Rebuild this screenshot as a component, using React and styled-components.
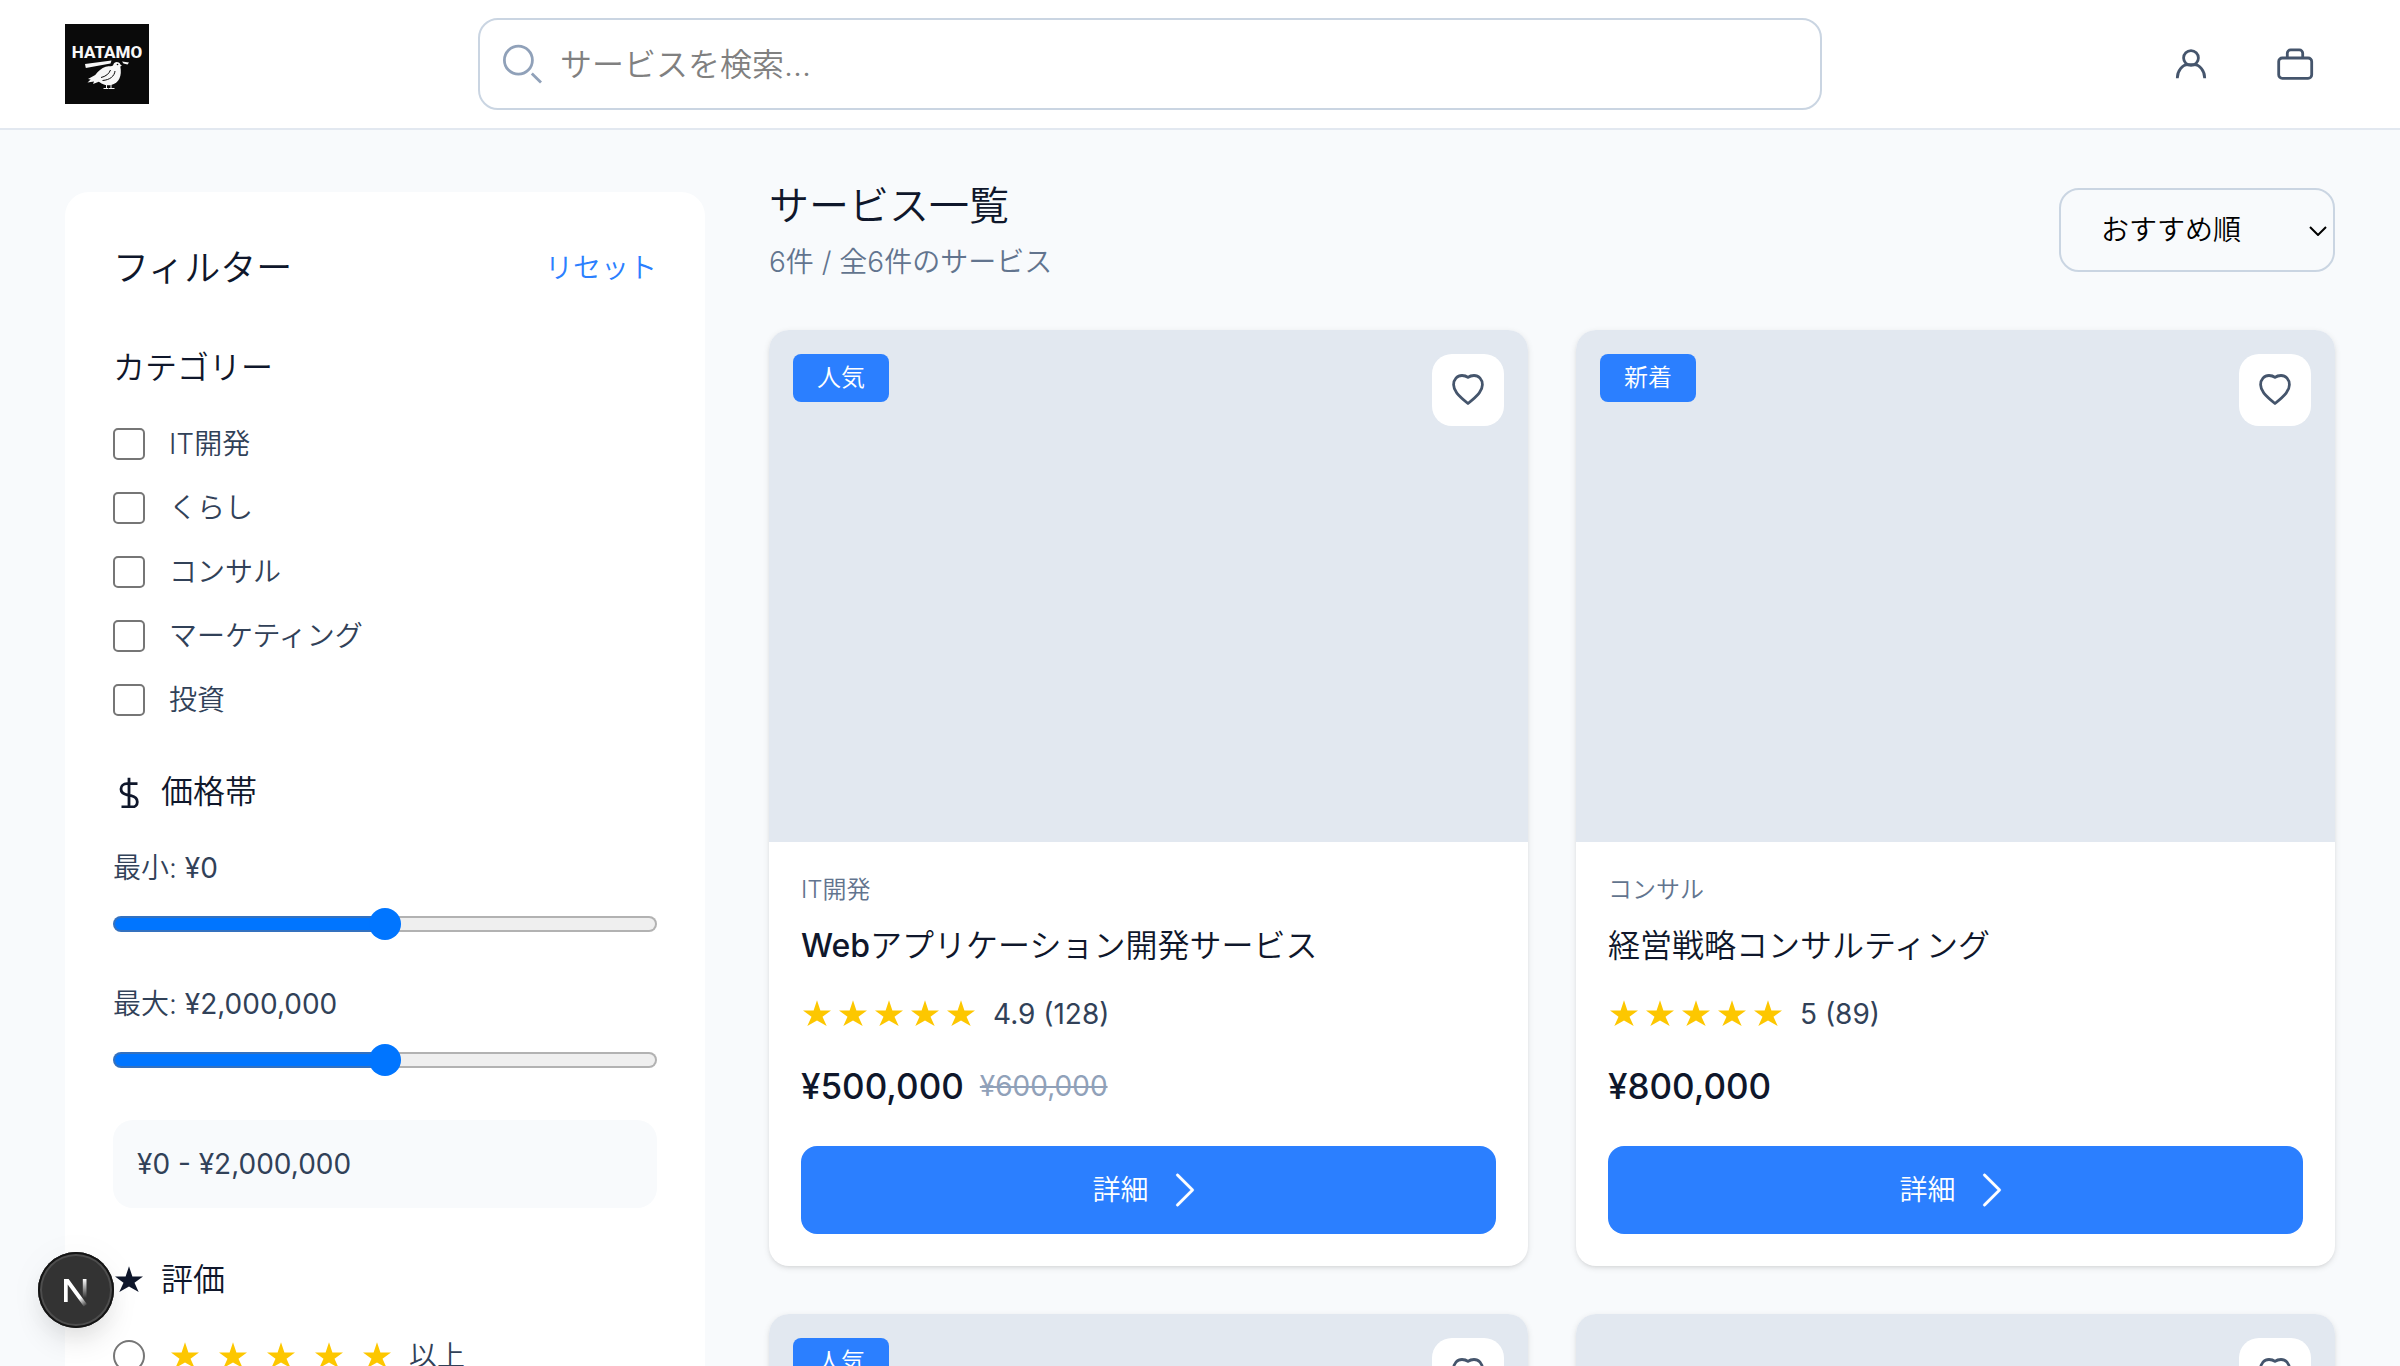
import React, { useState } from "react";
import styled, { createGlobalStyle } from "styled-components";
import { BsChevronRight } from "react-icons/bs";

const color = {
  page: "#f8fafc",
  panel: "#ffffff",
  line: "#e2e8f0",
  field: "#cad5e2",
  ink: "#0f172b",
  body: "#314158",
  icon: "#45556c",
  muted: "#62748e",
  faint: "#90a1b9",
  blue: "#2b7fff",
  star: "#fdc700",
};

const GlobalStyle = createGlobalStyle`
  *, *::before, *::after { box-sizing: border-box; }
  body {
    margin: 0;
    background: ${color.page};
    color: ${color.ink};
    font-family: Inter, "Noto Sans CJK JP", sans-serif;
    font-size: 28px;
    font-weight: 350;
    line-height: 40px;
  }
  h1, h2, h3, p { margin: 0; font-weight: inherit; }
  button, input, select { font: inherit; color: inherit; }
  button { border: 0; padding: 0; background: none; cursor: pointer; }
  svg { display: block; flex: none; }
`;

/* ---------- icons ---------- */

const Svg = styled.svg.attrs((p) => ({ width: p.$size, height: p.$size, "aria-hidden": true }))`
  fill: none;
  stroke: currentColor;
  stroke-width: 2.8;
`;

const SearchIcon = () => (
  <Svg $size={40} viewBox="0 0 40 40">
    <circle cx="16.4" cy="16.2" r="14" />
    <path d="M29.8 29.4 39 38.6" />
  </Svg>
);

const UserIcon = () => (
  <Svg $size={32} viewBox="0 0 32 32">
    <circle cx="16" cy="10" r="7.4" />
    <path d="M2.3 30.2C2.3 22.6 7.4 16.7 13 16.7h6c5.600 0 10.700 5.900 10.700 13.500" />
  </Svg>
);

const BagIcon = () => (
  <Svg $size={40} viewBox="0 0 40 40">
    <rect x="3.700" y="14" width="33" height="20.400" rx="3.600" />
    <path d="M12.300 14V9.200a3.300 3.300 0 0 1 3.300-3.300h8.800a3.300 3.300 0 0 1 3.300 3.300V14" />
  </Svg>
);

const HeartIcon = () => (
  <Svg $size={40} viewBox="0 0 40 40">
    <path
      strokeLinejoin="round"
      d="M20 7.400C18.200 6 16.200 5.500 14 5.500c-4.900 0-8.400 4-8.400 9.300C5.600 20.500 9.500 25 20 33.500c10.500-8.500 14.400-13 14.400-18.700 0-5.300-3.500-9.300-8.400-9.300-2.200 0-4.200.5-6 1.900Z"
    />
  </Svg>
);

const DollarIcon = () => (
  <Svg $size={32} viewBox="0 0 32 32">
    <path d="M16 1.700V31M24.500 7.700H14c-3.600 0-6 2.300-6 5.300 0 3.400 2.400 5 6 5.800l4 .9c3.700.9 6.300 2.600 6.300 6.200 0 3-2 5.100-5 5.100H8.500" />
  </Svg>
);

const StarSvg = styled.svg.attrs({ width: 32, height: 32, viewBox: "0 0 32 32", "aria-hidden": true })`
  fill: currentColor;
`;

const StarIcon = () => (
  <StarSvg>
    <path d="M16 2.300 19.400 12.500H30l-8.500 6.200L25.700 28 16 22.400 6.300 28l4.200-9.300L2 12.500h10.600Z" />
  </StarSvg>
);

/* ---------- header ---------- */

const Header = styled.header`
  position: sticky;
  top: 0;
  z-index: 10;
  display: flex;
  align-items: center;
  justify-content: space-between;
  padding: 18px 65px;
  background: ${color.panel};
  border-bottom: 2px solid ${color.line};
`;

const LogoLink = styled.a`
  display: block;
  width: 84px;
  height: 80px;
  background: #0a0a0a;
`;

const LogoText = styled.text`
  fill: #f7f7f7;
  font-family: Roboto, sans-serif;
  font-weight: 800;
  font-size: 17px;
`;

const Logo = () => (
  <LogoLink href="#" aria-label="HATAMO">
    <svg width="84" height="80" viewBox="0 0 84 80">
      <LogoText x="42" y="34" textAnchor="middle">HATAMO</LogoText>
      <g fill="#f7f7f7">
        <path d="M20 40 46.500 36.600 45.500 39.600 20.800 44Z" />
        <path d="M57 37.600 64 38.400 62.500 40.600 58.500 39.600Z" />
        <path d="M48.400 40.500c.6-3 5.600-3.500 7 0l1.500 1.300-1.600.6c.9 4.500.8 8.800-1 12.300-2.600 5.200-8.200 7.400-14 6.200-3-.6-5-2.200-6.500-3.200L28 60l1-2.400-6.500 1 3.200-3-2.700-.6 7.200-4c3-3.500 6.300-7 10.500-8.200 4-1.100 7.200.3 7.700-2.300Z" />
      </g>
      <g fill="none" stroke="#f7f7f7" strokeWidth="1">
        <path d="M41.500 60.500v4M46 60v4M38.500 64.500h5M44 64.500h5.500" />
      </g>
      <g fill="none" stroke="#0a0a0a" strokeWidth="1">
        <path d="M50 47c-.5 5-5 9-12.500 9.500M45.500 46c-1.500 4-5 6.500-9.500 7.500" />
      </g>
      <circle cx="52.500" cy="40.500" r=".8" fill="#0a0a0a" />
    </svg>
  </LogoLink>
);

const SearchBox = styled.label`
  display: flex;
  align-items: center;
  gap: 18px;
  flex: 0 1 1344px;
  height: 92px;
  padding: 0 22px;
  border: 2px solid ${color.field};
  border-radius: 20px;
  background: ${color.panel};
  color: ${color.faint};
`;

const SearchInput = styled.input`
  flex: 1;
  min-width: 0;
  height: 48px;
  padding: 0;
  border: 0;
  outline: 0;
  background: none;
  color: ${color.ink};
  font-size: 32px;
  &::placeholder { color: #808080; opacity: 1; }
`;

const HeaderActions = styled.nav`
  display: flex;
  gap: 24px;
`;

const IconButton = styled.button`
  display: grid;
  place-items: center;
  width: 80px;
  height: 80px;
  color: ${color.icon};
`;

/* ---------- layout ---------- */

const Page = styled.div`
  display: grid;
  grid-template-columns: 640px minmax(0, 1fr);
  gap: 64px;
  align-items: start;
  padding: 48px 65px;
`;

/* ---------- filter panel ---------- */

const Panel = styled.aside`
  position: sticky;
  top: 192px;
  display: grid;
  gap: 48px;
  padding: 48px;
  border-radius: 24px;
  background: ${color.panel};
`;

const PanelHead = styled.div`
  display: flex;
  align-items: center;
  justify-content: space-between;
`;

const PanelTitle = styled.h2`
  font-size: 36px;
  line-height: 56px;
`;

const ResetButton = styled.button`
  color: ${color.blue};
`;

const Group = styled.section`
  display: grid;
  gap: 32px;
`;

const GroupTitle = styled.h3`
  display: flex;
  align-items: center;
  gap: 16px;
  font-size: 32px;
  line-height: 48px;
`;

const Options = styled.div`
  display: grid;
  gap: 24px;
`;

const Option = styled.label`
  display: flex;
  align-items: center;
  gap: 24px;
  color: ${color.body};
`;

const Tick = styled.input`
  appearance: none;
  flex: none;
  width: 32px;
  height: 32px;
  margin: 0;
  border: 2px solid #767676;
  border-radius: ${(p) => (p.type === "radio" ? "50%" : "5px")};
  background: ${color.panel};
  &:checked { background: ${color.blue}; border-color: ${color.blue}; }
`;

const Stars = styled.span`
  display: flex;
  align-items: center;
  gap: ${(p) => p.$gap}px;
  color: ${color.star};
`;

const StarLabel = styled.span`
  display: flex;
  align-items: center;
  gap: 16px;
`;

const Sliders = styled.div`
  display: grid;
  gap: 44px;
`;

const SliderField = styled.label`
  display: grid;
  gap: 20px;
  color: ${color.body};
`;

const Slider = styled.input.attrs({ type: "range", min: 0, max: 100 })`
  appearance: none;
  width: 100%;
  height: 32px;
  margin: 0;
  background: none;
  &::-webkit-slider-runnable-track {
    height: 16px;
    border: 2px solid transparent;
    border-radius: 8px;
    background:
      linear-gradient(90deg, #0075ff var(--fill), #efefef var(--fill)) padding-box,
      linear-gradient(90deg, #3471bf var(--fill), #b2b2b2 var(--fill)) border-box;
  }
  &::-webkit-slider-thumb {
    appearance: none;
    width: 32px;
    height: 32px;
    margin-top: -10px;
    border-radius: 50%;
    background: #0075ff;
  }
`;

const Amount = styled.span`
  font-weight: 400;
`;

const PriceSummary = styled.p`
  padding: 24px;
  border-radius: 20px;
  background: ${color.page};
  color: ${color.body};
  font-weight: 400;
`;

const PriceSlider = ({ label, amount }) => {
  const [value, setValue] = useState(50);
  return (
    <SliderField>
      <span>{label}: <Amount>{amount}</Amount></span>
      <Slider
        value={value}
        onChange={(e) => setValue(Number(e.target.value))}
        style={{ "--fill": `${value}%` }}
      />
    </SliderField>
  );
};

const FiveStars = ({ gap }) => (
  <Stars $gap={gap}>
    {[1, 2, 3, 4, 5].map((n) => (
      <StarIcon key={n} />
    ))}
  </Stars>
);

const categories = ["IT開発", "くらし", "コンサル", "マーケティング", "投資"];

const Filters = () => (
  <Panel>
    <PanelHead>
      <PanelTitle>フィルター</PanelTitle>
      <ResetButton type="button">リセット</ResetButton>
    </PanelHead>
    <Group>
      <GroupTitle>カテゴリー</GroupTitle>
      <Options>
        {categories.map((name) => (
          <Option key={name}>
            <Tick type="checkbox" name="category" value={name} />
            {name}
          </Option>
        ))}
      </Options>
    </Group>
    <Group>
      <GroupTitle><DollarIcon />価格帯</GroupTitle>
      <Sliders>
        <PriceSlider label="最小" amount="¥0" />
        <PriceSlider label="最大" amount="¥2,000,000" />
        <PriceSummary>¥0 - ¥2,000,000</PriceSummary>
      </Sliders>
    </Group>
    <Group>
      <GroupTitle><StarIcon />評価</GroupTitle>
      <Options>
        <Option>
          <Tick type="radio" name="rating" value="5" />
          <StarLabel><FiveStars gap={16} />以上</StarLabel>
        </Option>
      </Options>
    </Group>
  </Panel>
);

/* ---------- listing ---------- */

const Listing = styled.main`
  display: grid;
  gap: 48px;
`;

const ListingHead = styled.div`
  display: flex;
  align-items: center;
  justify-content: space-between;
`;

const Heading = styled.div`
  display: grid;
  gap: 8px;
`;

const ListingTitle = styled.h1`
  font-size: 40px;
  line-height: 56px;
`;

const Count = styled.p`
  color: ${color.muted};
`;

const SelectWrap = styled.div`
  position: relative;
  svg {
    position: absolute;
    right: 8px;
    top: 38px;
    pointer-events: none;
  }
`;

const Select = styled.select`
  appearance: none;
  display: block;
  width: 276px;
  height: 84px;
  padding: 0 40px;
  border: 2px solid ${color.field};
  border-radius: 20px;
  background: ${color.page};
  color: #000;
`;

const Cards = styled.div`
  display: grid;
  grid-template-columns: repeat(2, minmax(0, 1fr));
  gap: 48px;
`;

const Card = styled.article`
  overflow: hidden;
  border-radius: 20px;
  background: ${color.panel};
  box-shadow: 0 2px 6px rgba(0, 0, 0, 0.1), 0 2px 4px -2px rgba(0, 0, 0, 0.1);
`;

const Photo = styled.div`
  display: flex;
  align-items: flex-start;
  height: 512px;
  padding: 24px;
  background: ${color.line};
`;

const Badge = styled.span`
  padding: 8px 24px;
  border-radius: 8px;
  background: ${color.blue};
  color: #fff;
  font-size: 24px;
  line-height: 32px;
`;

const LikeButton = styled(IconButton)`
  width: 72px;
  height: 72px;
  margin-left: auto;
  border-radius: 20px;
  background: ${color.panel};
`;

const CardBody = styled.div`
  display: grid;
  padding: 32px;
`;

const Category = styled.p`
  margin-bottom: 16px;
  color: ${color.muted};
  font-size: 24px;
  line-height: 32px;
`;

const CardTitle = styled.h3`
  margin-bottom: 24px;
  font-size: 32px;
  line-height: 48px;
`;

const Latin = styled.span`
  font-weight: 500;
`;

const Rating = styled.div`
  display: flex;
  align-items: center;
  gap: 16px;
  margin-bottom: 24px;
  color: ${color.body};
  font-weight: 400;
`;

const Prices = styled.div`
  display: flex;
  align-items: center;
  gap: 16px;
  margin-bottom: 32px;
  line-height: 56px;
`;

const Price = styled.strong`
  font-size: 35px;
  font-weight: 500;
`;

const OldPrice = styled.s`
  color: ${color.faint};
  font-weight: 400;
`;

const DetailButton = styled.button`
  display: flex;
  align-items: center;
  justify-content: center;
  gap: 16px;
  height: 88px;
  border-radius: 16px;
  background: ${color.blue};
  color: #fff;
  svg { stroke: currentColor; stroke-width: 0.2; }
`;

const services = [
  { badge: "人気", category: "IT開発", latin: "Web", title: "アプリケーション開発サービス", rating: "4.9 (128)", price: "¥500,000", old: "¥600,000" },
  { badge: "新着", category: "コンサル", title: "経営戦略コンサルティング", rating: "5 (89)", price: "¥800,000" },
  { badge: "人気", category: "マーケティング", title: "マーケティング支援", rating: "4.8 (96)", price: "¥300,000" },
  { category: "くらし", title: "くらしサポート", rating: "4.7 (64)", price: "¥50,000" },
];

const ServiceCard = ({ item }) => (
  <Card>
    <Photo>
      {item.badge && <Badge>{item.badge}</Badge>}
      <LikeButton type="button" aria-label="お気に入り"><HeartIcon /></LikeButton>
    </Photo>
    <CardBody>
      <Category>{item.category}</Category>
      <CardTitle>{item.latin && <Latin>{item.latin}</Latin>}{item.title}</CardTitle>
      <Rating><FiveStars gap={4} />{item.rating}</Rating>
      <Prices>
        <Price>{item.price}</Price>
        {item.old && <OldPrice>{item.old}</OldPrice>}
      </Prices>
      <DetailButton type="button">詳細<BsChevronRight size={40} aria-hidden /></DetailButton>
    </CardBody>
  </Card>
);

/* ---------- floating dev badge ---------- */

const DevButton = styled.button`
  position: fixed;
  left: 38px;
  bottom: 38px;
  z-index: 20;
  display: grid;
  place-items: center;
  width: 76px;
  height: 76px;
  border-radius: 50%;
  background: #333;
  box-shadow:
    inset 0 0 0 2px #141414,
    inset 0 0 0 4px #4d4d4d,
    0 16px 32px -8px rgba(0, 0, 0, 0.16),
    0 4px 40px rgba(0, 0, 0, 0.04);
`;

const DevBadge = () => (
  <DevButton type="button" aria-label="Next.js">
    <svg width="76" height="76" viewBox="0 0 76 76">
      <defs>
        <linearGradient id="diag" gradientUnits="userSpaceOnUse" x1="36" y1="38" x2="48" y2="54">
          <stop offset=".5" stopColor="#fff" />
          <stop offset="1" stopColor="#fff" stopOpacity="0" />
        </linearGradient>
        <linearGradient id="stem" gradientUnits="userSpaceOnUse" x1="0" y1="27" x2="0" y2="46">
          <stop offset="0" stopColor="#fff" />
          <stop offset="1" stopColor="#fff" stopOpacity="0" />
        </linearGradient>
      </defs>
      <path d="M26 27h4.600L49 52.200 45.800 54.600 29.700 32.600V50H26Z" fill="url(#diag)" />
      <path d="M44.800 27h3.700v19h-3.700Z" fill="url(#stem)" />
    </svg>
  </DevButton>
);

export default function App() {
  return (
    <>
      <GlobalStyle />
      <Header>
        <Logo />
        <SearchBox>
          <SearchIcon />
          <SearchInput type="search" placeholder="サービスを検索..." aria-label="サービスを検索" />
        </SearchBox>
        <HeaderActions>
          <IconButton type="button" aria-label="アカウント"><UserIcon /></IconButton>
          <IconButton type="button" aria-label="カート"><BagIcon /></IconButton>
        </HeaderActions>
      </Header>
      <Page>
        <Filters />
        <Listing>
          <ListingHead>
            <Heading>
              <ListingTitle>サービス一覧</ListingTitle>
              <Count>6件 / 全6件のサービス</Count>
            </Heading>
            <SelectWrap>
              <Select aria-label="並び順" defaultValue="recommended">
                <option value="recommended">おすすめ順</option>
              </Select>
              <svg width="18" height="10" viewBox="0 0 18 10" fill="none" stroke="#000" strokeWidth="2">
                <path d="M1 1l8 8 8-8" />
              </svg>
            </SelectWrap>
          </ListingHead>
          <Cards>
            {services.map((item) => (
              <ServiceCard key={item.title} item={item} />
            ))}
          </Cards>
        </Listing>
      </Page>
      <DevBadge />
    </>
  );
}
